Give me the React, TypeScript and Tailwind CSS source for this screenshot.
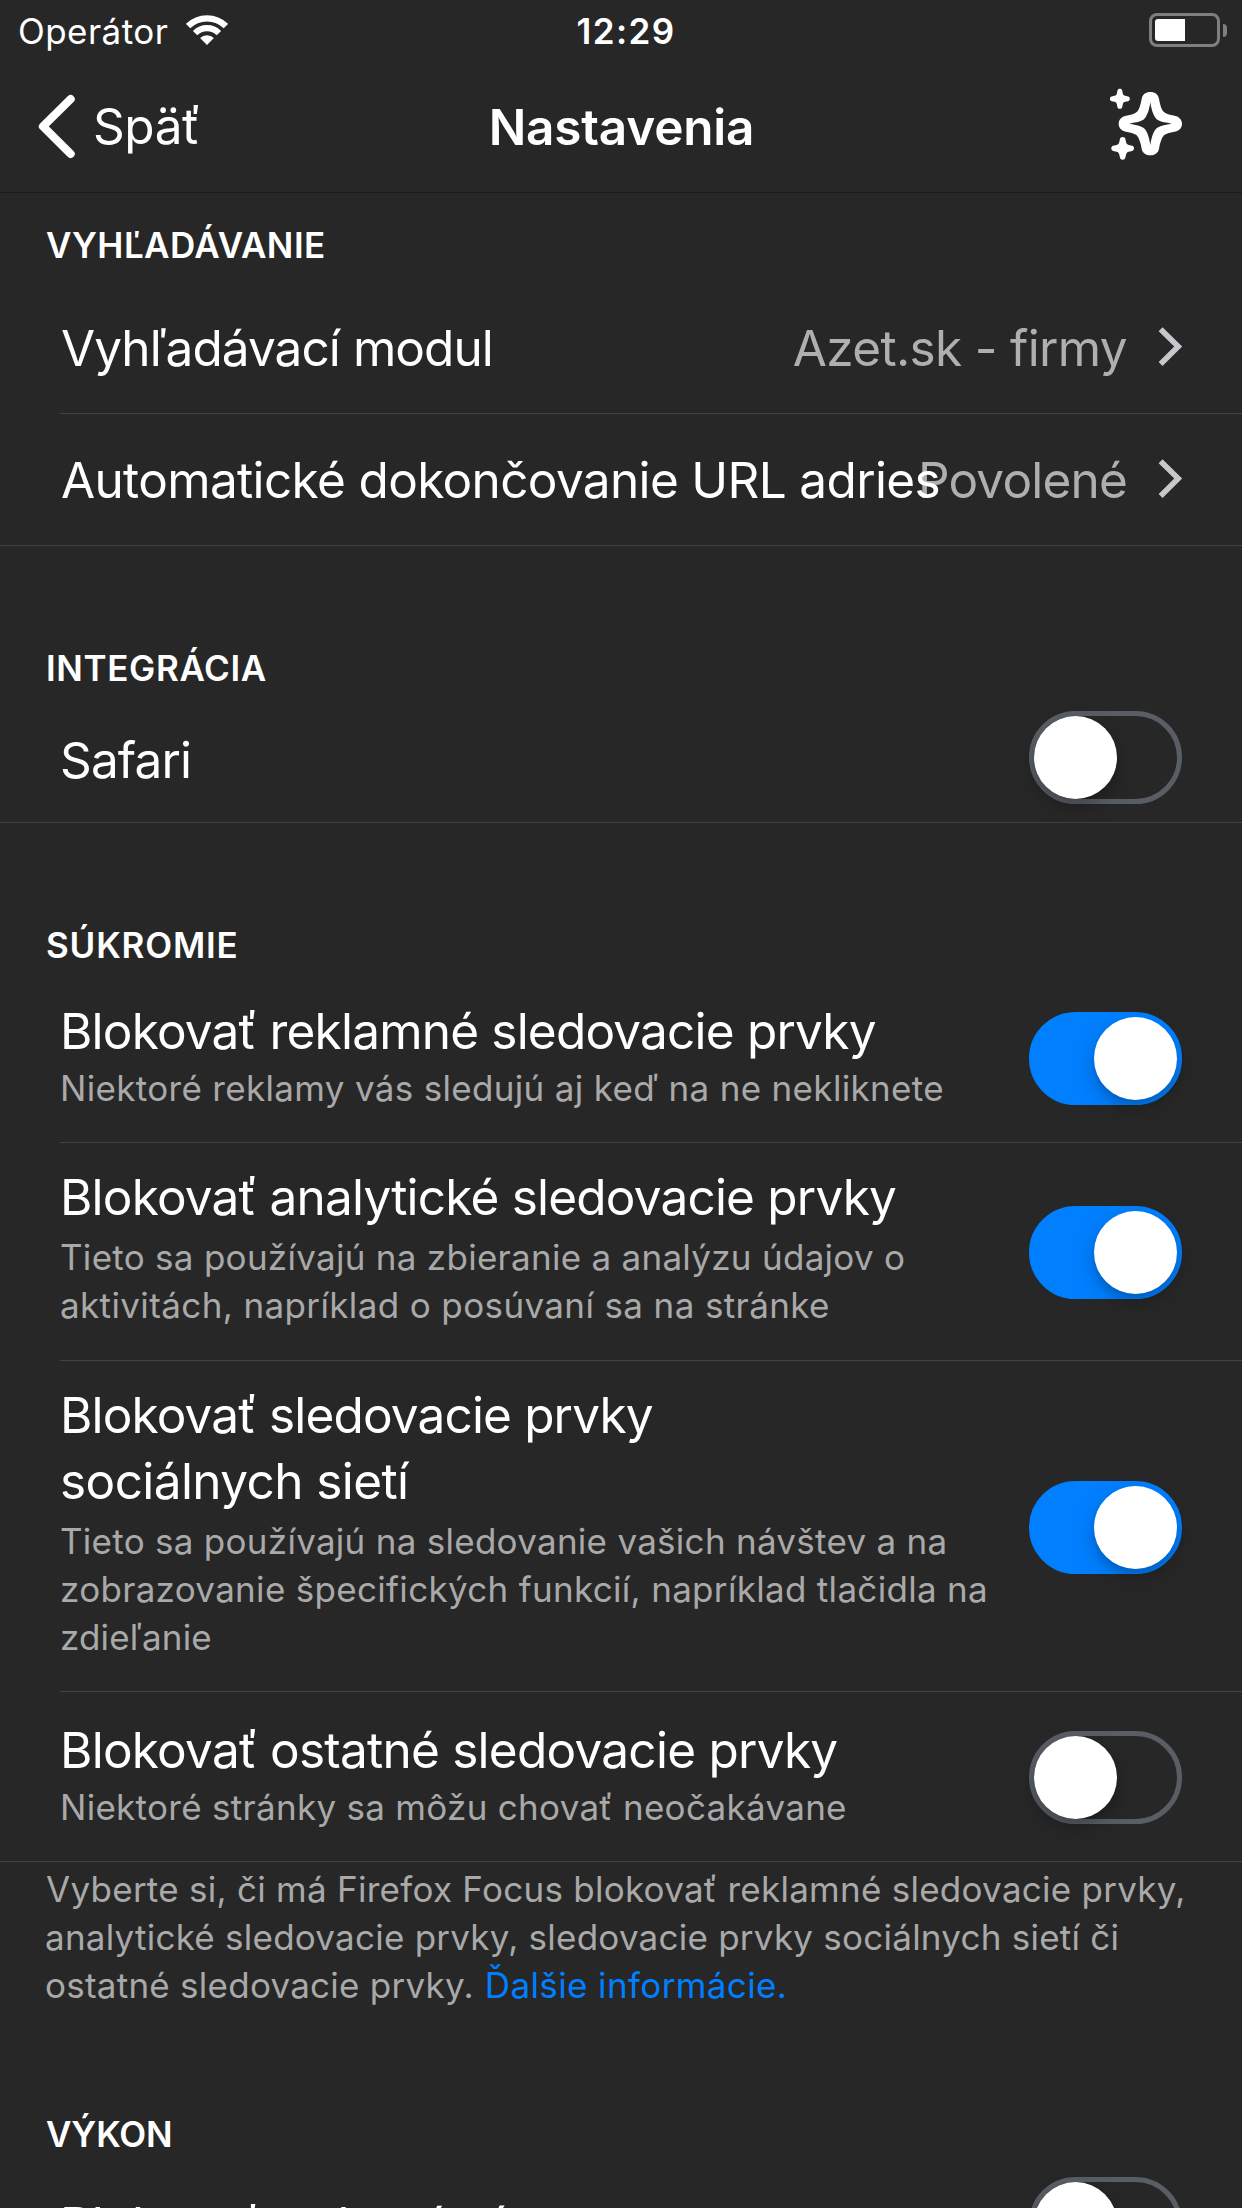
import React from "react";

type Line = { text: string; fit: string };

const sparkle =
  "M0-30C4-30 6-28 7-25L9-16C10-12 12-10 16-9L25-7C28-6 30-4 30 0C30 4 28 6 25 7L16 9C12 10 10 12 9 16L7 25C6 28 4 30 0 30C-4 30-6 28-7 25L-9 16C-10 12-12 10-16 9L-25 7C-28 6-30 4-30 0C-30-4-28-6-25-7L-16-9C-12-10-10-12-9-16L-7-25C-6-28-4-30 0-30Z";

function WifiIcon() {
  return (
    <svg className="ml-[18px] mt-[5px] h-[30px] w-[42px]" viewBox="0 0 42 30" fill="none" stroke="white" strokeWidth="6.2">
      <path d="M2.1 11.1A26.8 26.8 0 0 1 39.9 11.1" />
      <path d="M9.1 18.1A16.8 16.8 0 0 1 32.9 18.1" />
      <path d="M21 30L14.1 23.1A9.8 9.8 0 0 1 27.9 23.1Z" fill="white" stroke="none" />
    </svg>
  );
}

function Battery() {
  return (
    <div className="mr-[15px] mt-[3px] flex items-center gap-[3px]">
      <div className="h-[34px] w-[71px] rounded-[8px] border-[3px] border-[#7f7f7f] p-[3px]">
        <div className="h-[22px] w-[30px] rounded-l-[3px] bg-white" />
      </div>
      <div className="h-[13px] w-[4px] rounded-r-[4px] bg-[#7f7f7f]" />
    </div>
  );
}

function SparklesIcon() {
  return (
    <svg className="mr-[59px] mt-[28px] h-[73px] w-[73px]" viewBox="90 54 219 219" fill="white">
      <path
        fillRule="evenodd"
        d="M211 66C225 66 235 74 237 86C240 104 245 120 252 126C258 132 268 134 284 137C298 140 306 149 306 161C306 173 298 182 284 185C268 188 258 190 252 196C245 204 240 218 237 236C235 248 225 256 211 256C197 256 187 248 185 236C182 218 177 204 170 196C164 190 154 188 138 185C124 182 116 173 116 161C116 149 124 140 138 137C154 134 164 132 170 126C177 120 182 104 185 86C187 74 197 66 211 66ZM211 97C207 124 200 140 192 148C184 154 172 157 148 161C172 165 184 168 192 175C200 182 207 198 211 225C215 198 222 182 230 175C238 168 250 165 275 161C250 157 238 154 230 148C222 140 215 124 211 97Z"
      />
      <path d={sparkle} transform="translate(119.5 86.5)" />
      <path d={sparkle} transform="translate(128 235) scale(1.14)" />
    </svg>
  );
}

function Switch({ on, className }: { on?: boolean; className: string }) {
  return (
    <div
      className={`mr-[60px] flex h-[93px] w-[153px] shrink-0 rounded-full border-[5px] ${
        on ? "justify-end border-[#007fff] bg-[#007fff]" : "border-[#595e65]"
      } ${className}`}
    >
      <div className="size-[83px] rounded-full bg-white shadow-[0_9px_24px_rgba(0,0,0,0.15),0_6px_8px_rgba(0,0,0,0.14)]" />
    </div>
  );
}

function SectionHeader({ children, className }: { children: React.ReactNode; className: string }) {
  return <h2 className={`shrink-0 pl-[46px] text-[35px] font-semibold leading-[48px] ${className}`}>{children}</h2>;
}

function Divider({ inset }: { inset?: boolean }) {
  return <div className={`h-px shrink-0 bg-[#424244] ${inset ? "ml-[60px]" : ""}`} />;
}

function LinkRow({ label, value, inset }: { label: Line; value: Line; inset?: boolean }) {
  return (
    <>
      <div className="flex h-[131px] shrink-0 items-start pl-[60px] pt-[33px] text-[49.5px] leading-[66px]">
        <span className={`relative z-10 w-0 flex-1 whitespace-nowrap ${label.fit}`}>{label.text}</span>
        <span className={`whitespace-nowrap text-[#afafaf] ${value.fit}`}>{value.text}</span>
        <svg className="ml-[31px] mr-[59px] mt-[12px] h-[39px] w-[25px]" viewBox="0 0 25 39" fill="none" stroke="#c7c7cc" strokeWidth="5.6">
          <path d="M2.6 2.3L20.2 19.6L2.6 36.9" />
        </svg>
      </div>
      <Divider inset={inset} />
    </>
  );
}

type ToggleRowProps = {
  titles: Line[];
  details?: Line[];
  on?: boolean;
  row: string;
  detailGap?: string;
  switchTop: string;
};

function ToggleRow({ titles, details = [], on, row, detailGap = "", switchTop }: ToggleRowProps) {
  return (
    <div className={`flex shrink-0 items-start justify-between pl-[60px] ${row}`}>
      <div className="w-0 flex-1 whitespace-nowrap">
        {titles.map((l) => (
          <div key={l.text} className={`text-[49.5px] leading-[66px] ${l.fit}`}>{l.text}</div>
        ))}
        <div className={`text-[35px] leading-[48px] text-[#a9a9a9] ${detailGap}`}>
          {details.map((l) => (
            <div key={l.text} className={l.fit}>{l.text}</div>
          ))}
        </div>
      </div>
      <Switch on={on} className={switchTop} />
    </div>
  );
}

export default function App() {
  return (
    <div className="flex h-[2208px] w-[1242px] flex-col overflow-hidden bg-[#272727] font-[Inter,sans-serif] text-white">
      <div className="grid h-[60px] shrink-0 grid-cols-3 items-start pt-[10px] text-[35px] leading-[42px]">
        <div className="flex pl-[18px]">
          <span className="tracking-[0.45px]">Operátor</span>
          <WifiIcon />
        </div>
        <span className="pl-[10px] text-center font-semibold tracking-[1.38px]">12:29</span>
        <div className="flex justify-end">
          <Battery />
        </div>
      </div>

      <nav className="grid h-[133px] shrink-0 grid-cols-3 items-start border-b border-[#1b1b1b] text-[49.5px] leading-[66px]">
        <div className="flex items-start pl-[38px] pt-[33px]">
          <svg className="mt-px h-[66px] w-[38px]" viewBox="0 0 38 66" fill="none" stroke="white" strokeWidth="8.2" strokeLinecap="round" strokeLinejoin="round">
            <path d="M32.6 5.2L5 32.4L32.6 59.8" />
          </svg>
          <span className="ml-[17px] tracking-[-0.45px]">Späť</span>
        </div>
        <h1 className="pl-px pt-[34px] text-center font-semibold tracking-[-0.2px]">Nastavenia</h1>
        <div className="flex justify-end">
          <SparklesIcon />
        </div>
      </nav>

      <SectionHeader className="pb-[13px] pt-[28px] tracking-[0.45px]">VYHĽADÁVANIE</SectionHeader>
      <LinkRow
        inset
        label={{ text: "Vyhľadávací modul", fit: "ml-px tracking-[-0.93px]" }}
        value={{ text: "Azet.sk - firmy", fit: "tracking-[-0.66px]" }}
      />
      <LinkRow
        label={{ text: "Automatické dokončovanie URL adries", fit: "ml-px tracking-[-0.65px]" }}
        value={{ text: "Povolené", fit: "tracking-[-0.81px]" }}
      />

      <SectionHeader className="pb-[11px] pt-[98px] tracking-[0.63px]">INTEGRÁCIA</SectionHeader>
      <ToggleRow titles={[{ text: "Safari", fit: "tracking-[-0.85px]" }]} row="h-[119px] pt-[24px]" switchTop="-mt-[16px]" />
      <Divider />

      <SectionHeader className="pb-[11px] pt-[98px] tracking-[0.81px]">SÚKROMIE</SectionHeader>
      <ToggleRow
        on
        titles={[{ text: "Blokovať reklamné sledovacie prvky", fit: "tracking-[-0.8px]" }]}
        details={[{ text: "Niektoré reklamy vás sledujú aj keď na ne nekliknete", fit: "tracking-[0.325px]" }]}
        row="h-[162px] pt-[18px]"
        switchTop="mt-[14px]"
      />
      <Divider inset />
      <ToggleRow
        on
        titles={[{ text: "Blokovať analytické sledovacie prvky", fit: "tracking-[-0.8px]" }]}
        details={[
          { text: "Tieto sa používajú na zbieranie a analýzu údajov o", fit: "tracking-[0.28px]" },
          { text: "aktivitách, napríklad o posúvaní sa na stránke", fit: "tracking-[0.38px]" },
        ]}
        row="h-[217px] pt-[21px]"
        detailGap="pt-[3px]"
        switchTop="mt-[42px]"
      />
      <Divider inset />
      <ToggleRow
        on
        titles={[
          { text: "Blokovať sledovacie prvky", fit: "tracking-[-0.85px]" },
          { text: "sociálnych sietí", fit: "tracking-[-0.591px]" },
        ]}
        details={[
          { text: "Tieto sa používajú na sledovanie vašich návštev a na", fit: "tracking-[0.276px]" },
          { text: "zobrazovanie špecifických funkcií, napríklad tlačidla na", fit: "tracking-[0.31px]" },
          { text: "zdieľanie", fit: "tracking-[0.184px]" },
        ]}
        row="h-[330px] pt-[21px]"
        detailGap="pt-[3px]"
        switchTop="mt-[99px]"
      />
      <Divider inset />
      <ToggleRow
        titles={[{ text: "Blokovať ostatné sledovacie prvky", fit: "tracking-[-0.75px]" }]}
        details={[{ text: "Niektoré stránky sa môžu chovať neočakávane", fit: "tracking-[0.29px]" }]}
        row="h-[169px] pt-[25px]"
        switchTop="mt-[14px]"
      />
      <Divider />

      <p className="shrink-0 whitespace-nowrap pl-[45px] pt-[3px] text-[35px] leading-[48px] text-[#a9a9a9]">
        <span className="ml-px block tracking-[0.265px]">Vyberte si, či má Firefox Focus blokovať reklamné sledovacie prvky,</span>
        <span className="block tracking-[0.24px]">analytické sledovacie prvky, sledovacie prvky sociálnych sietí či</span>
        <span className="block tracking-[0.25px]">
          ostatné sledovacie prvky. <a className="ml-px tracking-[0.38px] text-[#007fff]">Ďalšie informácie.</a>
        </span>
      </p>

      <SectionHeader className="pb-[11px] pt-[101px] tracking-[-0.15px]">VÝKON</SectionHeader>
      <ToggleRow
        titles={[{ text: "Blokovať webové písma", fit: "tracking-[-0.7px]" }]}
        row="h-[140px] pt-[23px]"
        switchTop="-mt-[15px]"
      />
    </div>
  );
}
